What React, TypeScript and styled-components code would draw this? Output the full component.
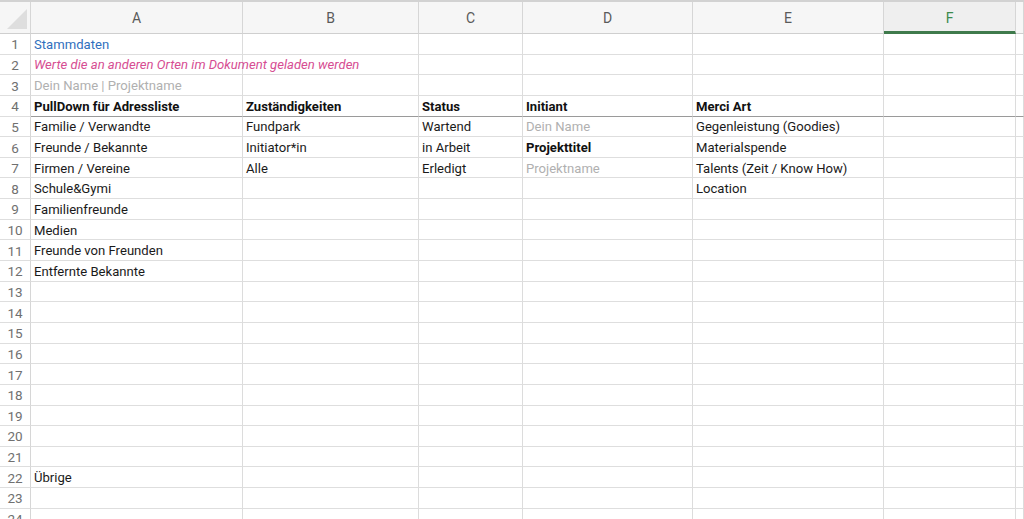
import React from "react";
import styled, { createGlobalStyle } from "styled-components";

const GlobalStyle = createGlobalStyle`
    html, body {
        margin: 0;
        padding: 0;
        background: #ffffff;
        overflow: hidden;
    }
    body {
        font-family: Roboto, "Liberation Sans", sans-serif;
    }
`;

const COLUMNS = ["A", "B", "C", "D", "E", "F", ""];
const ACTIVE_COLUMN = "F";
const ROW_COUNT = 24;

type Tone = "normal" | "bold" | "link" | "note" | "muted";

type CellData = { text: string; tone?: Tone };

const data: Record<number, Record<string, CellData>> = {
    1: { A: { text: "Stammdaten", tone: "link" } },
    2: { A: { text: "Werte die an anderen Orten im Dokument geladen werden", tone: "note" } },
    3: { A: { text: "Dein Name | Projektname", tone: "muted" } },
    4: {
        A: { text: "PullDown für Adressliste", tone: "bold" },
        B: { text: "Zuständigkeiten", tone: "bold" },
        C: { text: "Status", tone: "bold" },
        D: { text: "Initiant", tone: "bold" },
        E: { text: "Merci Art", tone: "bold" },
    },
    5: {
        A: { text: "Familie / Verwandte" },
        B: { text: "Fundpark" },
        C: { text: "Wartend" },
        D: { text: "Dein Name", tone: "muted" },
        E: { text: "Gegenleistung (Goodies)" },
    },
    6: {
        A: { text: "Freunde / Bekannte" },
        B: { text: "Initiator*in" },
        C: { text: "in Arbeit" },
        D: { text: "Projekttitel", tone: "bold" },
        E: { text: "Materialspende" },
    },
    7: {
        A: { text: "Firmen / Vereine" },
        B: { text: "Alle" },
        C: { text: "Erledigt" },
        D: { text: "Projektname", tone: "muted" },
        E: { text: "Talents (Zeit / Know How)" },
    },
    8: { A: { text: "Schule&Gymi" }, E: { text: "Location" } },
    9: { A: { text: "Familienfreunde" } },
    10: { A: { text: "Medien" } },
    11: { A: { text: "Freunde von Freunden" } },
    12: { A: { text: "Entfernte Bekannte" } },
    22: { A: { text: "Übrige" } },
};

const Sheet = styled.div`
    display: grid;
    grid-template-columns: 31px 212px 176px 104px 170px 191px 132px 1fr;
    grid-template-rows: 32px repeat(${ROW_COUNT}, 20.65px);
    border-top: 2px solid #d2d2d2;
    width: 1024px;
    height: 519px;
    box-sizing: border-box;
    overflow: hidden;
`;

const Corner = styled.div`
    position: relative;
    background: #f6f6f6;
    border-right: 1px solid #d6d6d6;
    border-bottom: 1px solid #cfcfcf;
    box-sizing: border-box;

    &::after {
        content: "";
        position: absolute;
        right: 3px;
        bottom: 4px;
        width: 0;
        height: 0;
        border-left: 20px solid transparent;
        border-bottom: 20px solid #dedede;
    }
`;

const ColumnHead = styled.div<{ $active?: boolean }>`
    display: flex;
    align-items: center;
    justify-content: center;
    background: ${(p) => (p.$active ? "#efefef" : "#f6f6f6")};
    color: ${(p) => (p.$active ? "#3c8a4c" : "#5a5a5a")};
    font-size: 14px;
    border-right: 1px solid #d6d6d6;
    border-bottom: ${(p) => (p.$active ? "3px solid #3f7a4c" : "1px solid #cfcfcf")};
    box-sizing: border-box;
    padding-top: ${(p) => (p.$active ? "2px" : "0")};
`;

const RowHead = styled.div`
    display: flex;
    align-items: center;
    justify-content: center;
    color: #707070;
    font-size: 13.5px;
    border-right: 1px solid #d6d6d6;
    border-bottom: 1px solid #dedede;
    box-sizing: border-box;
    padding-top: 1px;
`;

const toneStyles: Record<Tone, string> = {
    normal: "color: #1a1a1a;",
    bold: "color: #111111; font-weight: 700;",
    link: "color: #2f6fbd;",
    note: "color: #d64d92; font-style: italic;",
    muted: "color: #b0b0b0;",
};

const Cell = styled.div<{ $tone: Tone; $strong?: boolean }>`
    display: flex;
    align-items: center;
    padding: 1px 3px 0;
    font-size: 13.1px;
    white-space: nowrap;
    overflow: visible;
    border-right: 1px solid #dcdcdc;
    border-bottom: 1px solid ${(p) => (p.$strong ? "#9a9a9a" : "#dedede")};
    box-sizing: border-box;
    min-width: 0;
    position: relative;
    z-index: 1;
    ${(p) => toneStyles[p.$tone]}
`;

export default function App() {
    const rows = Array.from({ length: ROW_COUNT }, (_, i) => i + 1);

    return (
        <>
            <GlobalStyle />
            <Sheet>
                <Corner />
                {COLUMNS.map((c, i) => (
                    <ColumnHead key={`h${i}`} $active={c === ACTIVE_COLUMN}>
                        {c}
                    </ColumnHead>
                ))}
                {rows.map((r) => (
                    <React.Fragment key={r}>
                        <RowHead>{r}</RowHead>
                        {COLUMNS.map((c, i) => {
                            const cell = data[r]?.[c];
                            return (
                                <Cell key={`${r}-${i}`} $tone={cell?.tone ?? "normal"} $strong={r === 4}>
                                    {cell?.text}
                                </Cell>
                            );
                        })}
                    </React.Fragment>
                ))}
            </Sheet>
        </>
    );
}
